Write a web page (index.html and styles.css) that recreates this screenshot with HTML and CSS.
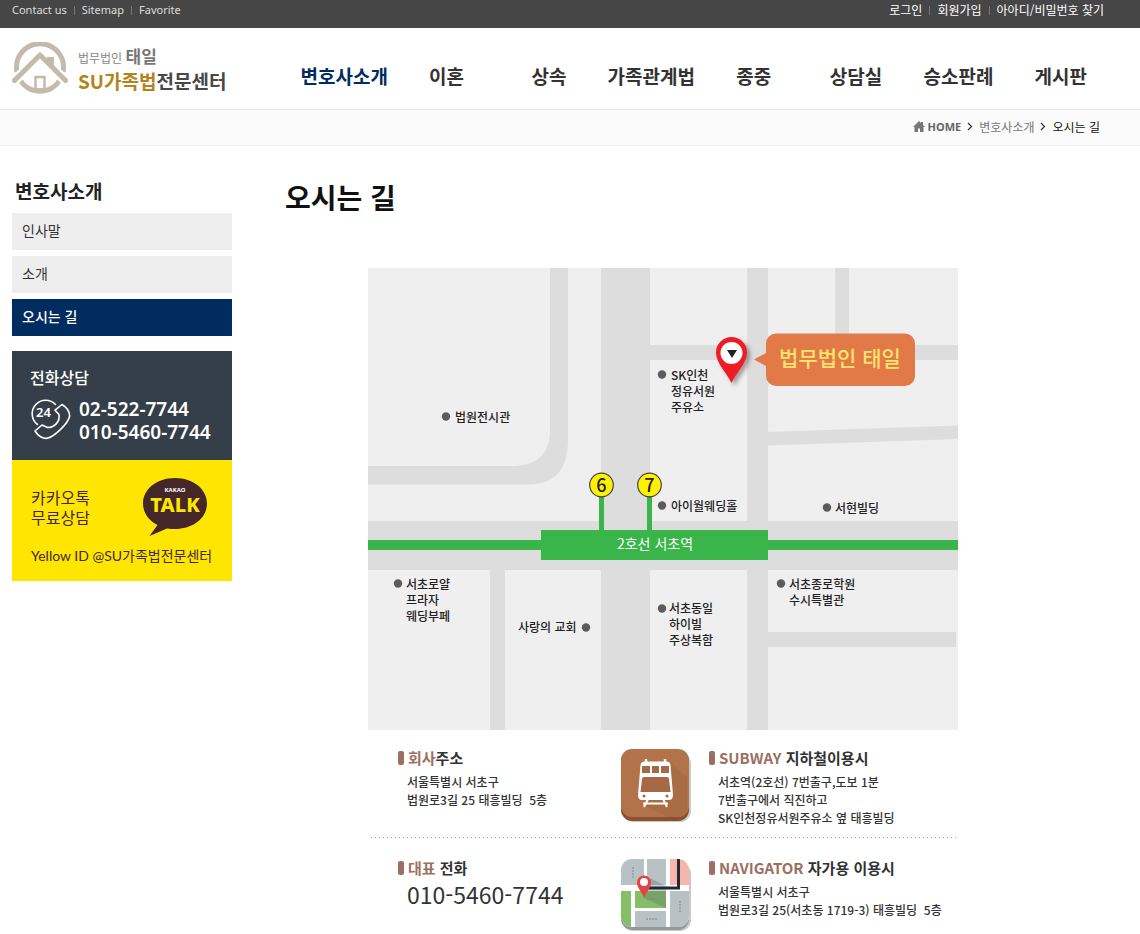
FILE: index.html
```html
<!DOCTYPE html>
<html lang="ko">
<head>
<meta charset="utf-8">
<meta name="viewport" content="width=device-width, initial-scale=1">
<title>오시는 길 - SU가족법전문센터</title>
<link rel="stylesheet" href="styles.css">
</head>
<body>
<div class="topbar">
  <ul class="top-links">
    <li><a href="#">Contact us</a></li>
    <li><a href="#">Sitemap</a></li>
    <li><a href="#">Favorite</a></li>
  </ul>
  <ul class="top-links member-links">
    <li><a href="#">로그인</a></li>
    <li><a href="#">회원가입</a></li>
    <li><a href="#">아아디/비밀번호 찾기</a></li>
  </ul>
</div>

<header class="header">
  <a class="logo" href="#">
    <svg class="logo-mark" viewBox="0 0 56 54" aria-hidden="true">
      <g fill="none" stroke="#c3baa9">
        <path d="M5 30A23.500 23.500 0 1 1 51 30" stroke-width="5"/>
        <path d="M8 38A23.500 23.500 0 0 0 48 38" stroke-width="5"/>
        <path d="M2.500 38.500L28 14L53.500 38.500" stroke="#fff" stroke-width="10"/>
        <path d="M2.500 38.500L28 13L53.500 38.500" stroke-width="5" stroke-linecap="round" stroke-linejoin="round"/>
        <path d="M23.500 47V35H32.500V47" stroke-width="2.500"/>
        <path d="M22 47H34" stroke-width="2"/>
      </g>
      <path d="M35 15H42V26L35 20Z" fill="#c3baa9"/>
    </svg>
    <span class="logo-text">
      <span class="logo-top">법무법인 <b>태일</b></span>
      <span class="logo-name"><em>SU가족법</em>전문센터</span>
    </span>
  </a>
  <nav class="nav">
    <a class="current" href="#">변호사소개</a>
    <a href="#">이혼</a>
    <a href="#">상속</a>
    <a href="#">가족관계법</a>
    <a href="#">종중</a>
    <a href="#">상담실</a>
    <a href="#">승소판례</a>
    <a href="#">게시판</a>
  </nav>
</header>

<div class="crumbs">
  <a class="home" href="#">
    <svg width="12" height="11" viewBox="0 0 12 11" aria-hidden="true"><path d="M6 0L8 2V1H10V4L12 6H10.500V11H7V7.500H5V11H1.500V6H0Z" fill="#777"/></svg>HOME</a>
  <svg class="chevron" width="6" height="9" viewBox="0 0 6 9" aria-hidden="true"><path d="M1 1L4.500 4.500L1 8" fill="none" stroke="#333" stroke-width="1.200"/></svg>
  <a href="#">변호사소개</a>
  <svg class="chevron" width="6" height="9" viewBox="0 0 6 9" aria-hidden="true"><path d="M1 1L4.500 4.500L1 8" fill="none" stroke="#333" stroke-width="1.200"/></svg>
  <span class="here">오시는 길</span>
</div>

<div class="page">
  <aside class="side">
    <h2 class="side-title">변호사소개</h2>
    <ul class="side-menu">
      <li><a href="#">인사말</a></li>
      <li><a href="#">소개</a></li>
      <li><a class="active" href="#">오시는 길</a></li>
    </ul>
    <section class="call">
      <h3>전화상담</h3>
      <div class="call-row">
        <svg class="call-icon" viewBox="0 0 41 41" aria-hidden="true">
          <g fill="none" stroke="#fff" stroke-width="1.600" stroke-linejoin="round" stroke-linecap="round">
            <path d="M25.500 5.500A13.500 13.500 0 1 0 7.500 25.500"/>
            <path d="M32 5.500L25 11.200L29 15.500C30 22.500 25 28.500 17.500 28.500L12 26L5 32C8 37 13 39.800 17 39.300C24 38 38 25 39.700 17C39.700 12.500 36 8 32 5.500Z"/>
          </g>
          <text class="call-24" x="6" y="18">24</text>
        </svg>
        <p class="call-numbers">02-522-7744<br>010-5460-7744</p>
      </div>
    </section>
    <section class="kakao">
      <div class="kakao-row">
        <p class="kakao-title">카카오톡<br>무료상담</p>
        <svg class="kakao-logo" viewBox="0 0 66 60" role="img" aria-label="KAKAO TALK">
          <path d="M33 1C15 1 1 12 1 26.500C1 36 7 44 15.500 48L7.500 59L25 51.500C28 52 30 52 33 52C51 52 65 41 65 26.500S51 1 33 1Z" fill="#452729"/>
          <text class="kakao-small" x="33" y="15">KAKAO</text>
          <text class="kakao-big" x="33" y="35">TALK</text>
        </svg>
      </div>
      <p class="kakao-id">Yellow ID @SU가족법전문센터</p>
    </section>
  </aside>

  <main class="content">
    <h1>오시는 길</h1>
    <div class="location">
      <svg class="map" viewBox="0 0 590 462" role="img" aria-label="법무법인 태일 약도">
        <defs>
          <filter id="shade" x="-30%" y="-30%" width="180%" height="180%"><feDropShadow dx="3" dy="3" stdDeviation="2" flood-opacity="0.35"/></filter>
        </defs>
        <rect width="590" height="462" fill="#efefef"/>
        <g fill="#ddd">
          <path d="M182 0H200V172Q200 216.500 160 216.500H0V198H148Q182 196 182 162Z"/>
          <rect x="233" width="49" height="462"/>
          <rect x="379" width="21" height="462"/>
          <rect x="282" y="77" width="308" height="15"/>
          <rect x="467" width="14" height="80"/>
          <path d="M400 164L590 157.500V171L400 177.500Z"/>
          <rect y="253" width="590" height="49"/>
          <rect x="122" y="302" width="15" height="160"/>
          <rect x="400" y="364" width="188" height="15"/>
        </g>
        <g fill="#3ab54a">
          <rect y="272" width="590" height="10"/>
          <rect x="173" y="262" width="227" height="30"/>
          <rect x="231" y="225" width="5" height="40"/>
          <rect x="279" y="225" width="5" height="40"/>
        </g>
        <g fill="#fff100" stroke="#444" stroke-width="1.200">
          <circle cx="233.500" cy="217" r="11.800"/>
          <circle cx="281.500" cy="217" r="11.800"/>
        </g>
        <g class="exit">
          <text x="233.500" y="224">6</text>
          <text x="281.500" y="224">7</text>
        </g>
        <text class="station" x="287" y="281">2호선 서초역</text>
        <g fill="#5c5c5c">
          <circle cx="78" cy="148.500" r="4.200"/>
          <circle cx="294" cy="106.500" r="4.200"/>
          <circle cx="294" cy="237.500" r="4.200"/>
          <circle cx="459" cy="239.500" r="4.200"/>
          <circle cx="30" cy="315.500" r="4.200"/>
          <circle cx="218" cy="359.500" r="4.200"/>
          <circle cx="294" cy="340.500" r="4.200"/>
          <circle cx="413" cy="315.500" r="4.200"/>
        </g>
        <g class="place">
          <text x="87" y="154">법원전시관</text>
          <text x="303" y="112">SK인천</text>
          <text x="303" y="128">정유서원</text>
          <text x="303" y="144">주유소</text>
          <text x="303" y="243">아이월웨딩홀</text>
          <text x="467" y="245">서현빌딩</text>
          <text x="38" y="321">서초로얄</text>
          <text x="38" y="337">프라자</text>
          <text x="38" y="353">웨딩부페</text>
          <text x="150" y="364">사랑의 교회</text>
          <text x="301" y="345">서초동일</text>
          <text x="301" y="361">하이빌</text>
          <text x="301" y="377">주상복함</text>
          <text x="421" y="321">서초종로학원</text>
          <text x="421" y="337">수시특별관</text>
        </g>
        <path d="M363.500 115C359 105 348 95 348 84.500A15.500 15.500 0 0 1 379 84.500C379 95 368 105 363.500 115Z" fill="#ee1c25" filter="url(#shade)"/>
        <circle cx="363.500" cy="85" r="11" fill="#fff"/>
        <path d="M359 82H369L364 90Z" fill="#222"/>
        <path d="M386 91.500L398 85V75.500A10 10 0 0 1 408 65.500H537A10 10 0 0 1 547 75.500V108A10 10 0 0 1 537 118H408A10 10 0 0 1 398 108V98Z" fill="#e17a47"/>
        <text class="callout" x="472" y="98">법무법인 태일</text>
      </svg>

      <div class="info-row">
        <section class="info info-left">
          <h2><em>회사</em>주소</h2>
          <p>서울특별시 서초구<br>법원로3길 25 태흥빌딩&nbsp; 5층</p>
        </section>
        <svg class="info-icon" viewBox="0 0 72 74" aria-hidden="true">
          <rect x="2" y="4" width="68" height="69" rx="11" fill="#c9c9c9"/>
          <rect y="1" width="68" height="71" rx="11" fill="#8b5131"/>
          <rect width="68" height="68" rx="11" fill="#b3734a"/>
          <path d="M50 13L66 29V58Q66 67 58 68H46L24 57Z" fill="#a96d46"/>
          <g fill="none" stroke="#fff">
            <path d="M25 10V14M44 10V14" stroke-width="2.400"/>
            <path d="M27 50L23 58M42 50L46 58M22 54.500H47" stroke-width="2"/>
          </g>
          <path d="M23 12.500H46Q49 12.500 49.500 16L52 46Q52 51 48 51H21Q17 51 17 46L19.500 16Q20 12.500 23 12.500Z" fill="#fff"/>
          <path d="M21 17H29V24H21ZM31 17H38V24H31ZM40 17H48V24H40ZM23 28H46Q48 28 48 30L49.500 43H19.500L21 30Q21 28 23 28Z" fill="#a56a45"/>
          <circle cx="23" cy="47" r="1.500" fill="#a56a45"/><circle cx="46" cy="47" r="1.500" fill="#a56a45"/>
        </svg>
        <section class="info">
          <h2><em>SUBWAY</em> 지하철이용시</h2>
          <p>서초역(2호선) 7번출구,도보 1분<br>7번출구에서 직진하고<br>SK인천정유서원주유소 옆 태흥빌딩</p>
        </section>
      </div>

      <div class="info-row">
        <section class="info info-left">
          <h2><em>대표</em> 전화</h2>
          <p class="big-phone">010-5460-7744</p>
        </section>
        <svg class="info-icon" viewBox="0 0 72 74" aria-hidden="true">
          <defs><clipPath id="tile"><rect width="68" height="68" rx="11"/></clipPath></defs>
          <rect x="2" y="4" width="68" height="68" rx="11" fill="#c9c9c9"/>
          <rect y="1" width="68" height="70" rx="11" fill="#8e9b9c"/>
          <g clip-path="url(#tile)">
            <rect width="69" height="68" fill="#fff"/>
            <path d="M0 0H23V26H0ZM26 0H45V26H26ZM14 52H45V68H14ZM49 32H69V68H49Z" fill="#b8c1c4"/>
            <path d="M49 0H69V26H49Z" fill="#f8b5ab"/>
            <path d="M0 32H10V68H0ZM14 32H45V49H14Z" fill="#86bd67"/>
            <path d="M29 19L47 28H45V49L23 39Z" fill="#59656a" opacity="0.300"/>
            <path d="M24 29H57.500V0" fill="none" stroke="#20283a" stroke-width="3"/>
            <path d="M12 8V20M59 42V54M25 40H37M25 60H37" stroke="#7f888b" stroke-dasharray="2 1"/>
          </g>
          <path d="M23 39C21 33 16 29 16 23.500A7 7 0 0 1 30 23.500C30 29 25 33 23 39Z" fill="#e14444"/>
          <circle cx="23" cy="23" r="4" fill="#fff"/>
        </svg>
        <section class="info">
          <h2><em>NAVIGATOR</em> 자가용 이용시</h2>
          <p>서울특별시 서초구<br>법원로3길 25(서초동 1719-3) 태흥빌딩&nbsp; 5층</p>
        </section>
      </div>
    </div>
  </main>
</div>
</body>
</html>
```
FILE: styles.css
```css
* {
  box-sizing: border-box;
}

body,
h1,
h2,
h3,
p,
ul {
  margin: 0;
  padding: 0;
}

body {
  background: #fff;
  color: #333;
  font-family: "Noto Sans", "Noto Sans CJK KR", sans-serif;
  font-size: 12px;
}

ul {
  list-style: none;
}

a {
  color: inherit;
  text-decoration: none;
}

em {
  font-style: normal;
}

svg {
  display: block;
}

/* top bar */
.topbar {
  display: flex;
  justify-content: space-between;
  height: 28px;
  padding: 0 36px 0 12px;
  background: #464646;
}

.top-links {
  display: flex;
  height: 20px;
  align-items: center;
  color: #ddd;
  font-size: 11px;
  line-height: 16px;
  white-space: nowrap;
}

.top-links li {
  display: flex;
  align-items: center;
}

.top-links li + li::before {
  content: "";
  width: 1px;
  height: 9px;
  margin: 0 7px;
  background: #777;
}

.member-links {
  color: #fff;
  font-size: 12px;
  font-family: "Noto Sans CJK KR", sans-serif;
}

/* header */
.header {
  display: flex;
  justify-content: space-between;
  height: 82px;
  padding: 0 28px 0 12px;
  border-bottom: 1px solid #e5e5e5;
}

.logo {
  display: flex;
  gap: 10px;
  padding-top: 14px;
  font-family: "Noto Sans CJK KR", sans-serif;
  white-space: nowrap;
}

.logo-mark {
  width: 56px;
  height: 54px;
}

.logo-text {
  display: flex;
  flex-direction: column;
  padding-top: 3px;
}

.logo-top {
  color: #888;
  font-size: 12px;
  line-height: 22px;
}

.logo-top b {
  color: #777;
  font-size: 17px;
}

.logo-name {
  color: #484848;
  font-size: 19px;
  font-weight: 700;
  line-height: 24px;
}

.logo-name em {
  color: #b5831c;
}

.nav {
  display: grid;
  grid-template-columns: repeat(8, 1fr);
  width: 819px;
  padding-top: 34px;
  font-family: "Noto Sans CJK KR", sans-serif;
  font-size: 19px;
  font-weight: 700;
  line-height: 28px;
  text-align: center;
  white-space: nowrap;
}

.nav .current {
  color: #002c5f;
}

/* breadcrumb */
.crumbs {
  display: flex;
  justify-content: flex-end;
  align-items: center;
  gap: 6px;
  height: 36px;
  padding: 0 40px 2px 0;
  background: #fbfbfb;
  border-bottom: 1px solid #f0f0f0;
  color: #777;
  font-family: "Noto Sans CJK KR", sans-serif;
}

.home {
  display: flex;
  align-items: center;
  gap: 3px;
  color: #666;
  font-family: "Noto Sans", sans-serif;
  font-size: 11px;
  font-weight: 700;
}

.here {
  color: #111;
}

/* page */
.page {
  display: flex;
  padding: 30px 12px 0;
  font-family: "Noto Sans CJK KR", sans-serif;
}

.side {
  flex: 0 0 220px;
}

.side-title {
  padding-left: 3px;
  margin-bottom: 7px;
  color: #222;
  font-size: 19px;
  line-height: 30px;
}

.side-menu {
  display: flex;
  flex-direction: column;
  gap: 6px;
  margin-bottom: 15px;
}

.side-menu a {
  display: block;
  padding: 0 10px 2px;
  background: #eee;
  font-size: 14px;
  line-height: 35px;
}

.side-menu .active {
  background: #002c5f;
  color: #fff;
  font-weight: 500;
}

.call {
  height: 109px;
  padding: 14px 0 0 18px;
  background: #353f49;
  color: #fff;
}

.call h3 {
  font-size: 16px;
  font-weight: 500;
  line-height: 24px;
}

.call-row {
  display: flex;
  gap: 8px;
  padding-top: 9px;
}

.call-icon {
  width: 41px;
  height: 41px;
  margin-top: 1px;
}

.call-24 {
  fill: #fff;
  font-family: "Noto Sans", sans-serif;
  font-size: 13px;
  font-weight: 600;
}

.call-numbers {
  font-family: "Noto Sans", sans-serif;
  font-size: 19px;
  font-weight: 600;
  line-height: 23px;
  white-space: nowrap;
}

.kakao {
  height: 121px;
  padding: 17px 0 0 19px;
  background: #ffe600;
  color: #452729;
}

.kakao-row {
  display: flex;
  justify-content: space-between;
  padding-right: 24px;
}

.kakao-title {
  padding-top: 10px;
  font-size: 16px;
  line-height: 20px;
}

.kakao-logo {
  width: 66px;
  height: 60px;
}

.kakao-small {
  fill: #fff;
  font-family: "Noto Sans", sans-serif;
  font-size: 6px;
  font-weight: 700;
  text-anchor: middle;
}

.kakao-big {
  fill: #ffe600;
  font-family: "Noto Sans", sans-serif;
  font-size: 20px;
  font-weight: 800;
  text-anchor: middle;
}

.kakao-id {
  padding-top: 8px;
  font-family: Lato, "Noto Sans CJK KR", sans-serif;
  font-size: 14px;
  line-height: 22px;
  white-space: nowrap;
}

/* content */
.content {
  flex: 1;
  max-width: 809px;
  padding-left: 53px;
}

.content h1 {
  margin-bottom: 50px;
  color: #111;
  font-size: 28px;
  line-height: 42px;
}

.location {
  max-width: 590px;
  margin: 0 auto;
}

.map {
  width: 100%;
  height: auto;
}

.place {
  fill: #222;
  font-size: 12px;
  font-weight: 500;
}

.exit {
  fill: #222;
  font-size: 18px;
  font-weight: 500;
  text-anchor: middle;
}

.station {
  fill: #fff;
  font-size: 14px;
  text-anchor: middle;
}

.callout {
  fill: #fee36e;
  font-size: 21px;
  font-weight: 500;
  text-anchor: middle;
}

.info-row {
  display: grid;
  grid-template-columns: 253px 88px 1fr;
  padding-top: 19px;
}

.info-row + .info-row {
  padding-top: 21px;
}

.info-row:not(:last-child) {
  min-height: 108px;
  background: repeating-linear-gradient(90deg, transparent 0 3px, #aaa 3px 4px) bottom / 100% 1px no-repeat;
}

.info-left {
  padding-left: 30px;
}

.info-icon {
  width: 72px;
  height: 74px;
}

.info h2 {
  display: flex;
  align-items: center;
  margin-bottom: 6px;
  font-size: 15px;
  line-height: 18px;
  white-space: pre;
}

.info h2::before {
  content: "";
  width: 6px;
  height: 14px;
  margin-right: 4px;
  border-radius: 2px;
  background: #9c6f62;
}

.info h2 em {
  color: #9c6f62;
}

.info p {
  padding-left: 9px;
  font-size: 12px;
  font-weight: 500;
  line-height: 18px;
  white-space: nowrap;
}

.info .big-phone {
  font-size: 23px;
  font-weight: 400;
  line-height: 22px;
}
```
